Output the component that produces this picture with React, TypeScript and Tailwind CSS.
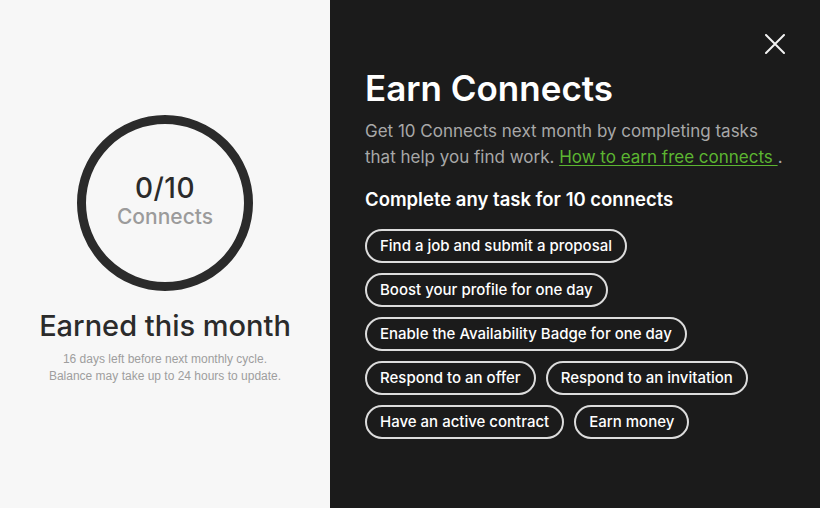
import React from "react";

const tasks: string[][] = [
  ["Find a job and submit a proposal"],
  ["Boost your profile for one day"],
  ["Enable the Availability Badge for one day"],
  ["Respond to an offer", "Respond to an invitation"],
  ["Have an active contract", "Earn money"],
];

export default function App() {
  return (
    <div
      className="flex w-[820px] h-[508px] overflow-hidden"
      style={{ fontFamily: 'Inter, "Liberation Sans", Arial, sans-serif' }}
    >
      <div className="w-[330px] h-full bg-[#f7f7f7] flex flex-col items-center pt-[115px]">
        <div className="w-[176px] h-[176px] rounded-full border-[9px] border-[#2b2b2b] flex flex-col items-center justify-center">
          <div className="text-[28px] leading-[30px] font-medium text-[#2b2b2b] mt-[-5px] tracking-[0.5px]">0/10</div>
          <div className="text-[21px] leading-[24px] font-medium text-[#9b9b9b] mt-[2px]">Connects</div>
        </div>
        <div className="mt-[17px] text-[29px] leading-[36px] font-medium text-[#2b2b2b]">Earned this month</div>
        <div
          className="mt-[7px] text-[12px] leading-[17px] text-[#9e9e9e] text-center"
          style={{ fontFamily: '"Liberation Sans", Arial, sans-serif' }}
        >
          16 days left before next monthly cycle.
          <br />
          Balance may take up to 24 hours to update.
        </div>
      </div>
      <div className="relative flex-1 h-full bg-[#1b1b1b] pl-[35px] pt-[66px]">
        <button className="absolute top-[34px] right-[35px] w-[20px] h-[20px] text-[#f2f2f2]">
          <svg viewBox="0 0 20 20" width="20" height="20" fill="none" stroke="currentColor" strokeWidth="2" strokeLinecap="round">
            <path d="M1 1L19 19M19 1L1 19" />
          </svg>
        </button>
        <h1 className="text-[35px] leading-[44px] font-semibold text-white">Earn Connects</h1>
        <p className="mt-[8px] text-[17px] leading-[26px] text-[#a8a8a8] w-[440px]">
          Get 10 Connects next month by completing tasks
          <br />
          that help you find work.{" "}
          <a className="text-[#5cb531] underline underline-offset-2">How to earn free connects </a>.
        </p>
        <div className="mt-[17px] text-[18.5px] leading-[24px] font-semibold text-white">
          Complete any task for 10 connects
        </div>
        <div className="mt-[18px] flex flex-col gap-[10px]">
          {tasks.map((row, i) => (
            <div key={i} className="flex gap-[10px]">
              {row.map((t) => (
                <div
                  key={t}
                  className="h-[34px] px-[13px] rounded-full border-2 border-[#dcdcdc] flex items-center text-[15px] text-white font-medium"
                >
                  {t}
                </div>
              ))}
            </div>
          ))}
        </div>
      </div>
    </div>
  );
}
